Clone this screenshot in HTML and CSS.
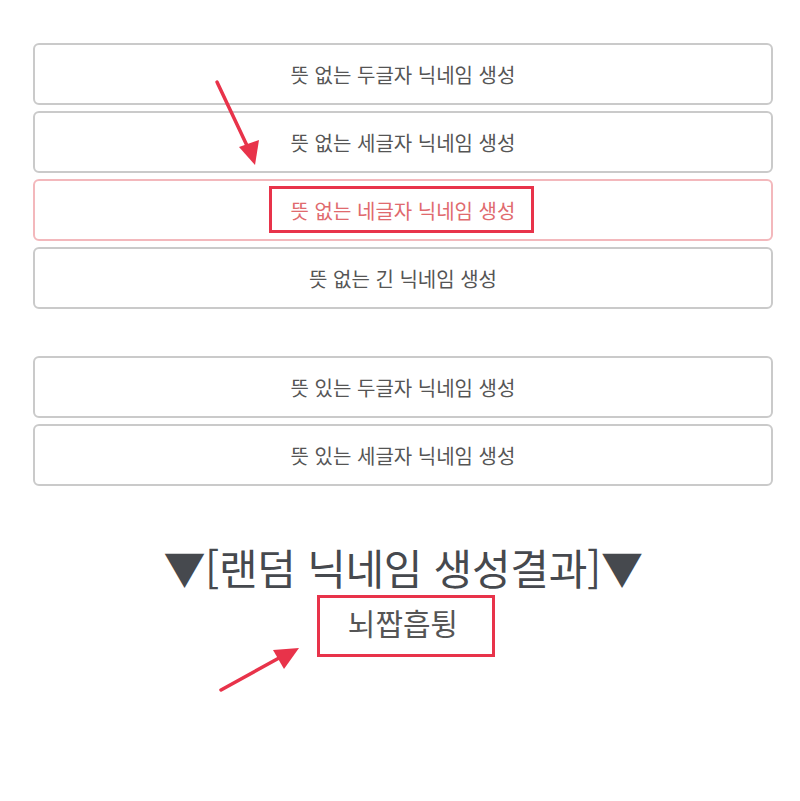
FILE: index.html
```html
<!DOCTYPE html>
<html lang="ko">
<head>
<meta charset="utf-8">
<link rel="stylesheet" href="styles.css">
</head>
<body>
<div class="page">
  <div class="group">
    <button class="btn">뜻 없는 두글자 닉네임 생성</button>
    <button class="btn">뜻 없는 세글자 닉네임 생성</button>
    <button class="btn btn-active"><span class="mark mark-btn"></span>뜻 없는 네글자 닉네임 생성</button>
    <button class="btn">뜻 없는 긴 닉네임 생성</button>
  </div>
  <div class="group group-second">
    <button class="btn">뜻 있는 두글자 닉네임 생성</button>
    <button class="btn">뜻 있는 세글자 닉네임 생성</button>
  </div>
  <div class="result">
    <h2 class="result-title">▼[랜덤 닉네임 생성결과]▼</h2>
    <div class="result-name"><span class="mark mark-result"></span>뇌짭흡튕</div>
  </div>
  <svg class="arrow arrow-top" width="60" height="100" viewBox="0 0 60 100">
    <line x1="4" y1="4" x2="37" y2="74" stroke="#e8334a" stroke-width="3.5" stroke-linecap="round"/>
    <polygon points="26,69 46,62 42,87" fill="#e8334a"/>
  </svg>
  <svg class="arrow arrow-bottom" width="90" height="50" viewBox="0 0 90 50">
    <line x1="4" y1="44" x2="62" y2="12" stroke="#e8334a" stroke-width="3.5" stroke-linecap="round"/>
    <polygon points="56,4 82,2 67,23" fill="#e8334a"/>
  </svg>
</div>
</body>
</html>
```

FILE: styles.css
```css
html, body {
  margin: 0;
  padding: 0;
  background: #ffffff;
}
body {
  font-family: "Noto Sans CJK KR", "Noto Sans", sans-serif;
  color: #555555;
}
.page {
  position: relative;
  width: 800px;
  height: 801px;
  padding: 43px 28px 0 33px;
  box-sizing: border-box;
}
.group {
  display: flex;
  flex-direction: column;
  gap: 6px;
}
.group-second {
  margin-top: 47px;
}
.btn {
  position: relative;
  height: 62px;
  width: 740px;
  border: 2px solid #cacaca;
  border-radius: 6px;
  background: #ffffff;
  font-family: "Noto Sans CJK KR", "Noto Sans", sans-serif;
  font-size: 20px;
  color: #555555;
  padding: 0;
  margin: 0;
  box-sizing: border-box;
}
.btn-active {
  border-color: #f3b8bc;
  color: #e06a6e;
}
.mark {
  position: absolute;
  border: 3px solid #e8334a;
  box-sizing: border-box;
  pointer-events: none;
}
.mark-btn {
  left: 234px;
  top: 5px;
  width: 265px;
  height: 47px;
}
.result {
  margin-top: 51px;
  display: flex;
  flex-direction: column;
  align-items: center;
  width: 740px;
}
.result-title {
  margin: 0;
  font-size: 42px;
  font-weight: 400;
  line-height: 60px;
  color: #46494e;
  letter-spacing: -0.3px;
}
.result-name {
  position: relative;
  font-size: 30px;
  line-height: 42px;
  margin-top: 4px;
  color: #555555;
}
.mark-result {
  left: -31px;
  top: -6px;
  width: 178px;
  height: 62px;
}
.arrow {
  position: absolute;
}
.arrow-top {
  left: 213px;
  top: 78px;
}
.arrow-bottom {
  left: 217px;
  top: 646px;
}
```
